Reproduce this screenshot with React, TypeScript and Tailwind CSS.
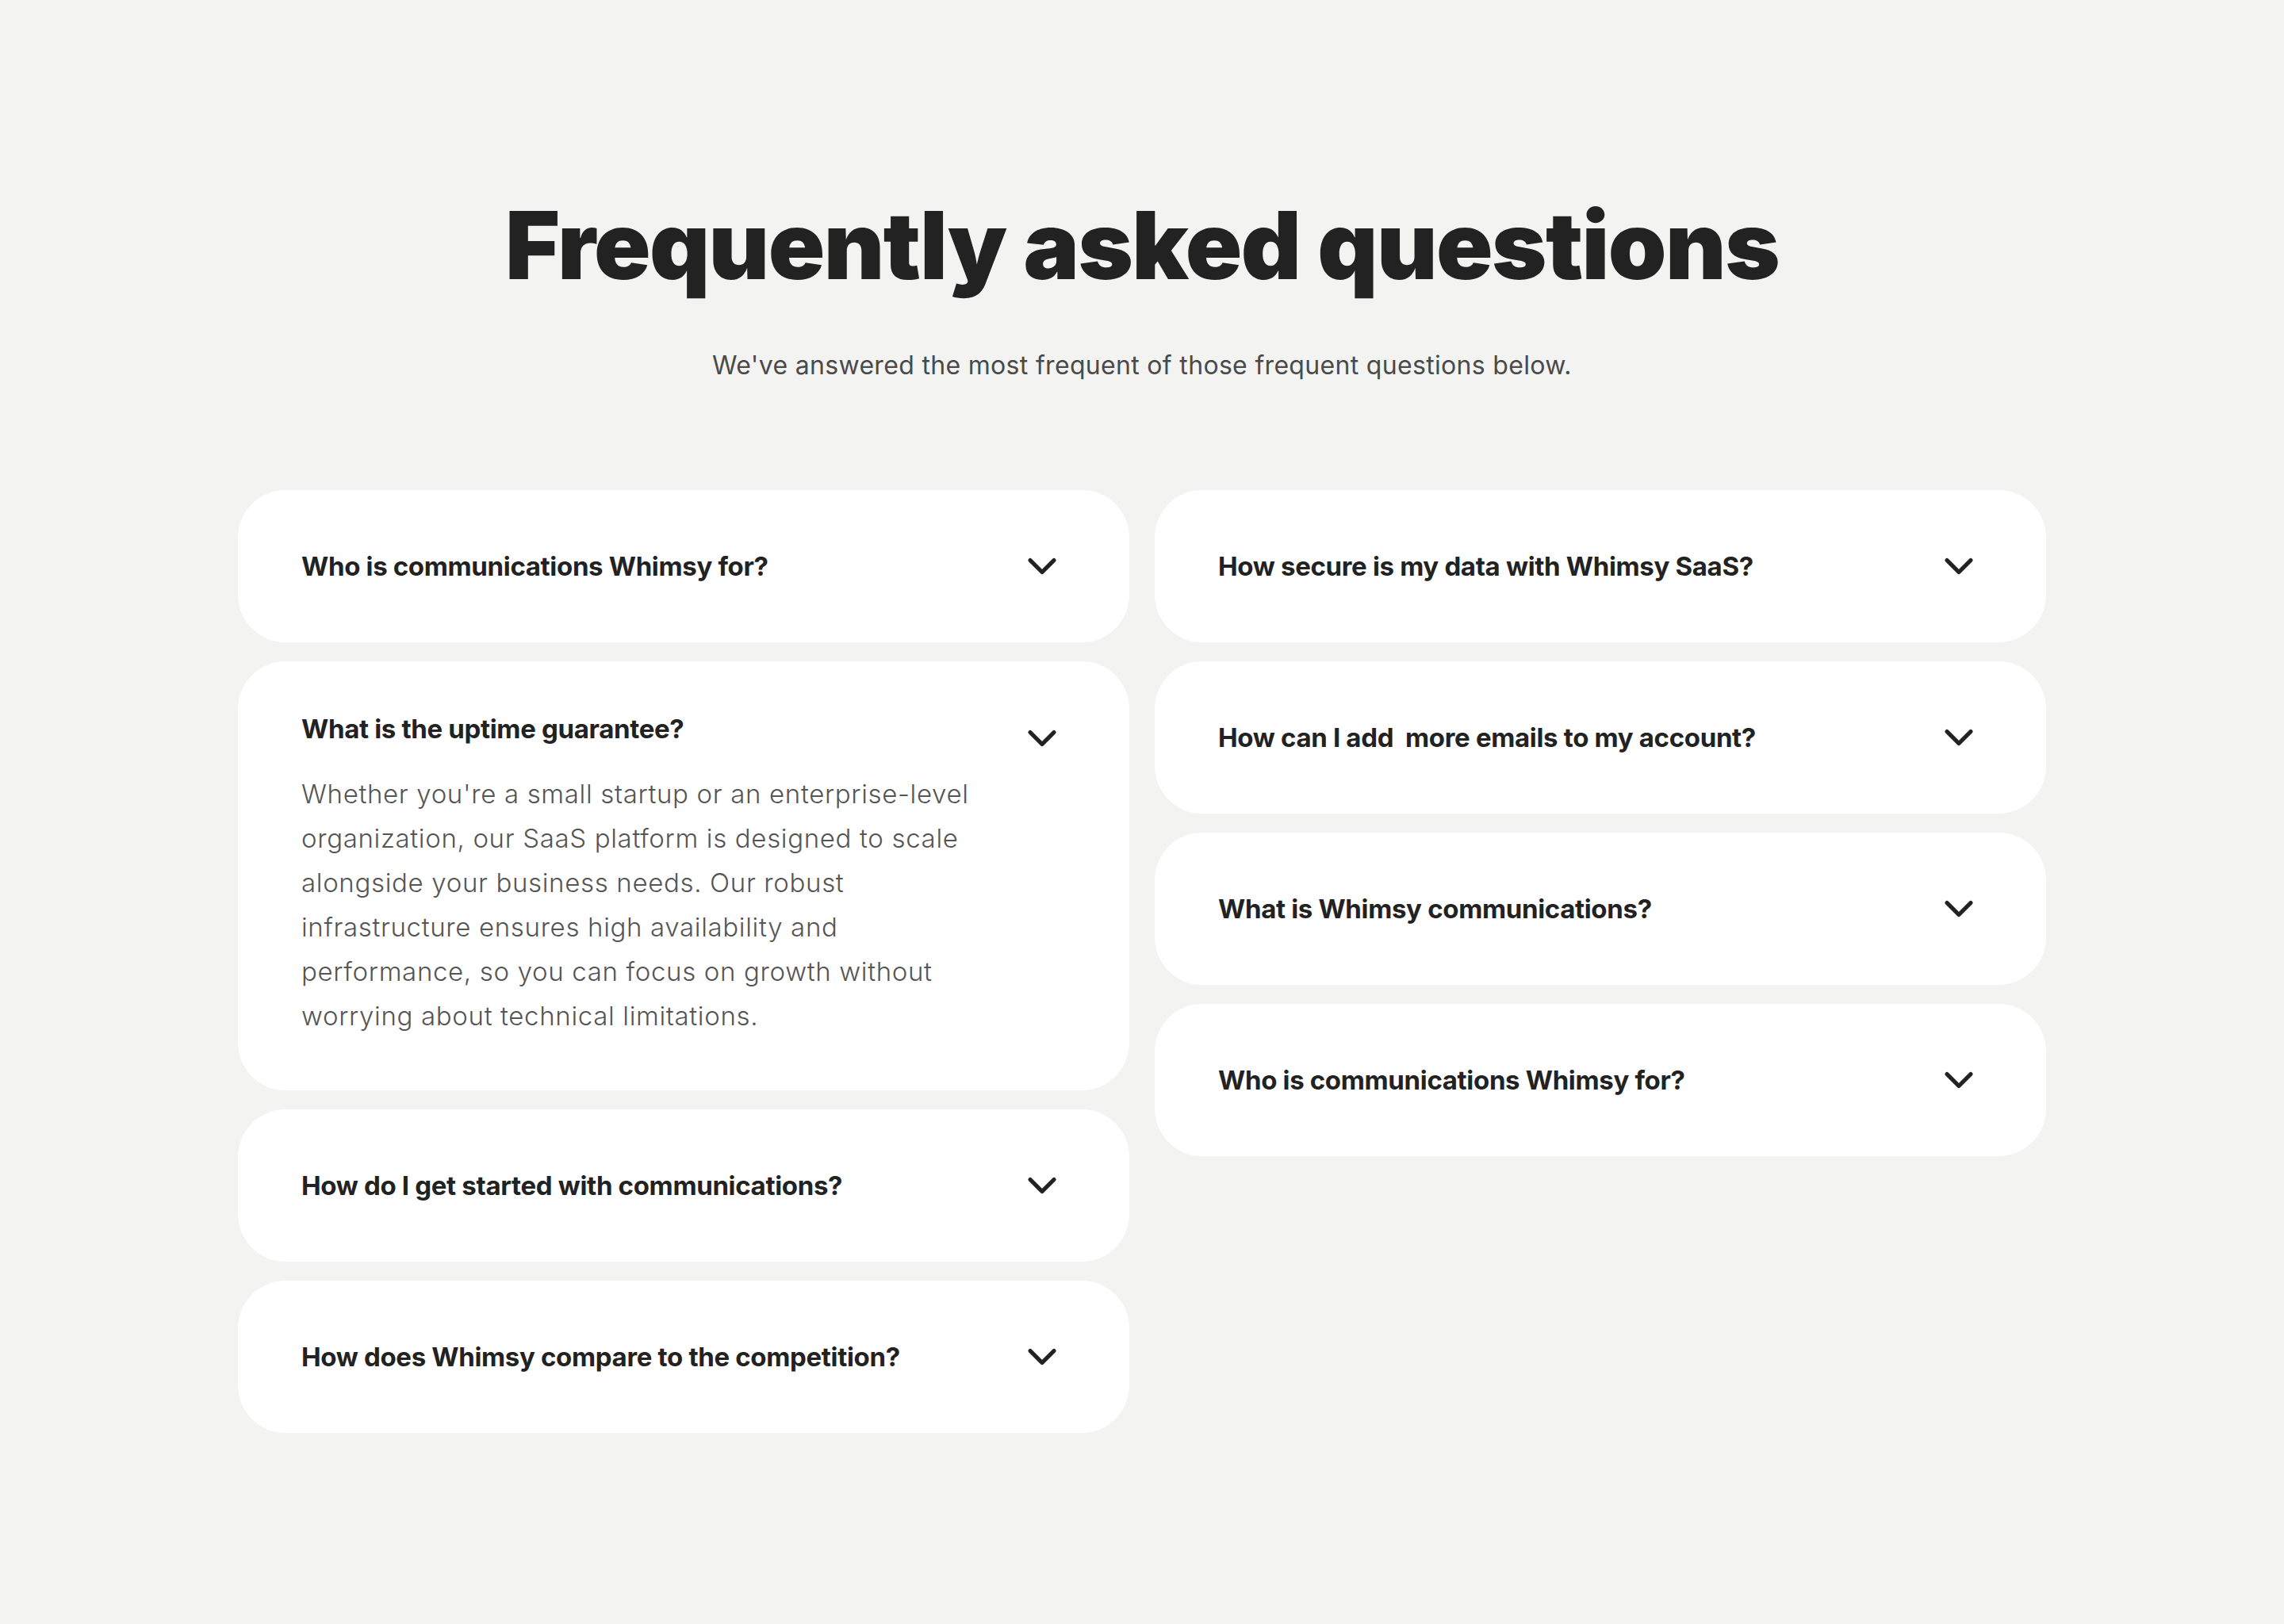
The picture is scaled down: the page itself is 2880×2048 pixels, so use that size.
import { useState } from 'react';
import { ChevronDown } from 'lucide-react';

type Faq = { id: string; q: string; a: string };

const ANSWER =
  "Whether you're a small startup or an enterprise-level organization, our SaaS platform is designed to scale alongside your business needs. Our robust infrastructure ensures high availability and performance, so you can focus on growth without worrying about technical limitations.";

const LEFT: Faq[] = [
  { id: 'l1', q: 'Who is communications Whimsy for?', a: ANSWER },
  { id: 'l2', q: 'What is the uptime guarantee?', a: ANSWER },
  { id: 'l3', q: 'How do I get started with communications?', a: ANSWER },
  { id: 'l4', q: 'How does Whimsy compare to the competition?', a: ANSWER },
];

const RIGHT: Faq[] = [
  { id: 'r1', q: 'How secure is my data with Whimsy SaaS?', a: ANSWER },
  { id: 'r2', q: 'How can I add\u00a0 more emails to my account?', a: ANSWER },
  { id: 'r3', q: 'What is Whimsy communications?', a: ANSWER },
  { id: 'r4', q: 'Who is communications Whimsy for?', a: ANSWER },
];

function FaqItem({ item, open, onToggle }: { item: Faq; open: boolean; onToggle: () => void }) {
  if (!open) {
    return (
      <button
        onClick={onToggle}
        className="flex w-full items-center justify-between rounded-[60px] bg-white px-20 py-[66px] text-left"
      >
        <span className="text-[33px] font-bold leading-[43px] tracking-[-0.01em] text-[#222222]">
          {item.q}
        </span>
        <ChevronDown size={60} strokeWidth={2.1} className="shrink-0 text-[#222222]" />
      </button>
    );
  }

  return (
    <div className="rounded-[60px] bg-white px-20 pt-16 pb-[66px]">
      <button onClick={onToggle} className="flex w-full items-start justify-between text-left">
        <span className="text-[33px] font-bold leading-[43px] tracking-[-0.01em] text-[#222222]">
          {item.q}
        </span>
        <ChevronDown size={60} strokeWidth={2.1} className="mt-[3px] shrink-0 text-[#222222]" />
      </button>
      <p className="mt-3 max-w-[870px] text-[33px] font-light leading-[56px] tracking-[0.02em] text-[#555555]">
        {item.a}
      </p>
    </div>
  );
}

export default function App() {
  const [openId, setOpenId] = useState<string | null>('l2');

  const toggle = (id: string) => setOpenId(openId === id ? null : id);

  return (
    <div className="min-h-screen bg-[#f3f3f1] pt-[250px] pb-40 font-['Inter',sans-serif]">
      <h1 className="text-center text-[118px] font-black leading-none tracking-[-0.013em] text-[#222222]">
        Frequently asked questions
      </h1>
      <p className="mt-[69px] text-center text-[32px] leading-[1.5] tracking-[0.01em] text-[#4a4a4a]">
        We've answered the most frequent of those frequent questions below.
      </p>

      <div className="mx-auto mt-[133px] grid w-[2280px] grid-cols-2 items-start gap-8">
        <div className="flex flex-col gap-6">
          {LEFT.map((item) => (
            <FaqItem key={item.id} item={item} open={openId === item.id} onToggle={() => toggle(item.id)} />
          ))}
        </div>
        <div className="flex flex-col gap-6">
          {RIGHT.map((item) => (
            <FaqItem key={item.id} item={item} open={openId === item.id} onToggle={() => toggle(item.id)} />
          ))}
        </div>
      </div>
    </div>
  );
}
